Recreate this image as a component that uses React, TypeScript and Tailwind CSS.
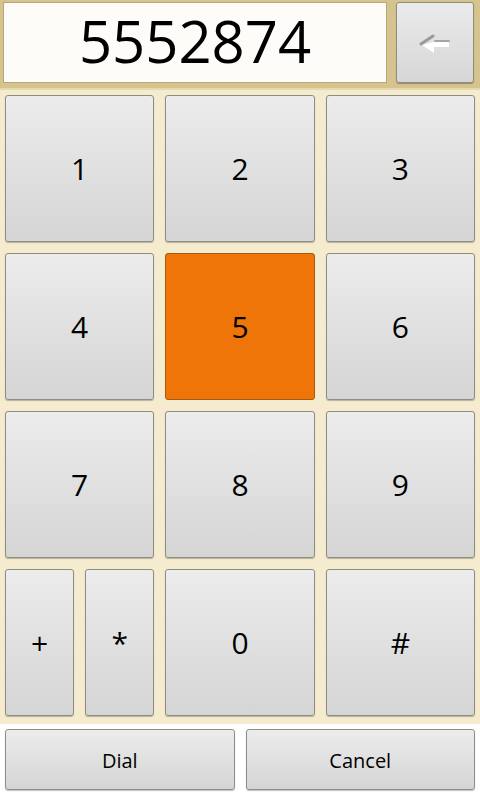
import React from 'react';

const keyClass =
  'flex items-center justify-center rounded-[3px] border border-[#8f8c80] bg-gradient-to-b from-[#ececec] to-[#d5d5d5] text-[30px] text-black shadow-[0_1px_1px_rgba(0,0,0,0.25)]';

function Key({ label, active = false }: { label: string; active?: boolean }) {
  return (
    <div
      className={
        active
          ? 'flex items-center justify-center rounded-[3px] border border-[#a45a10] bg-[#f07508] text-[30px] text-black'
          : keyClass
      }
    >
      {label}
    </div>
  );
}

export default function App() {
  const rows = [
    ['1', '2', '3'],
    ['4', '5', '6'],
    ['7', '8', '9'],
  ];

  return (
    <div className="flex h-[800px] w-[480px] flex-col bg-white" style={{ fontFamily: '"Open Sans", "DejaVu Sans", sans-serif' }}>
      {/* number display */}
      <div className="flex h-[90px] gap-[9px] bg-[#d6c48f] pl-[3px] pr-[6px] pt-[2px] pb-[7px] shadow-[inset_0_-2px_0_#e6d9ae]">
        <div className="flex flex-1 items-center justify-center border border-[#b9a877] bg-[#fdfcf8] pb-[4px] text-[58px] leading-none text-black">
          5552874
        </div>
        <div className="flex w-[78px] items-center justify-center rounded-[3px] border border-[#8f8c80] bg-gradient-to-b from-[#ebebeb] to-[#d6d6d6] shadow-[0_1px_1px_rgba(0,0,0,0.3)]">
          <svg width="38" height="24" viewBox="0 0 38 24" className="mt-[2px]">
            <path d="M5 12 L17 4" stroke="#9a9a9a" strokeWidth="3" strokeLinecap="round" fill="none" />
            <path d="M6 13 L18 21 L18 15 L33 15 L33 10 L18 10 Z" fill="#ffffff" />
            <path d="M19 9 L33 9" stroke="#a5a5a5" strokeWidth="2" strokeLinecap="round" />
          </svg>
        </div>
      </div>

      {/* keypad */}
      <div className="grid h-[634px] grid-cols-3 grid-rows-4 gap-[11px] bg-[#f5ebcf] px-[5px] pt-[5px] pb-[8px]">
        {rows.flat().map((k) => (
          <Key key={k} label={k} active={k === '5'} />
        ))}
        <div className="grid grid-cols-2 gap-[11px]">
          <Key label="+" />
          <Key label="*" />
        </div>
        <Key label="0" />
        <Key label="#" />
      </div>

      {/* actions */}
      <div className="grid grid-cols-2 gap-[11px] px-[5px] pt-[5px]">
        <div className="flex h-[61px] items-center justify-center rounded-[3px] border border-[#8f8c80] bg-gradient-to-b from-[#ececec] to-[#d5d5d5] pt-[2px] text-[20px] text-black shadow-[0_1px_1px_rgba(0,0,0,0.25)]">
          Dial
        </div>
        <div className="flex h-[61px] items-center justify-center rounded-[3px] border border-[#8f8c80] bg-gradient-to-b from-[#ececec] to-[#d5d5d5] pt-[2px] text-[20px] text-black shadow-[0_1px_1px_rgba(0,0,0,0.25)]">
          Cancel
        </div>
      </div>
    </div>
  );
}
